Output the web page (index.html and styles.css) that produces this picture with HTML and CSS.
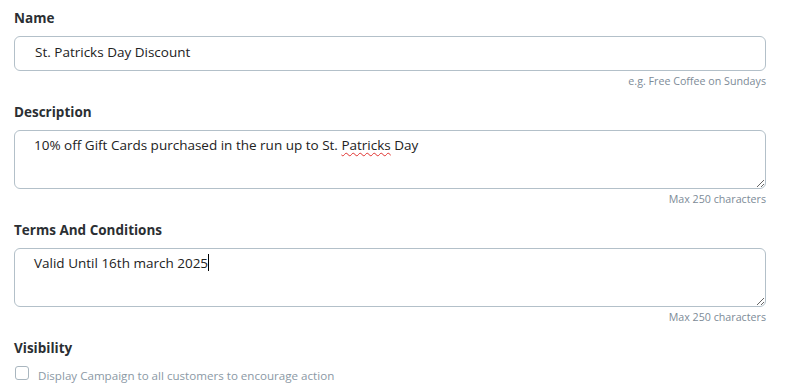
FILE: index.html
```html
<!DOCTYPE html>
<html lang="en">
<head>
  <meta charset="UTF-8">
  <title>Campaign</title>
  <link rel="stylesheet" href="styles.css">
</head>
<body>
  <form class="campaign-form">
    <div class="field">
      <label class="field-label" for="name">Name</label>
      <input class="field-input" id="name" type="text" value="St. Patricks Day Discount">
      <div class="field-hint">e.g. Free Coffee on Sundays</div>
    </div>

    <div class="field">
      <label class="field-label">Description</label>
      <div class="field-area">10% off Gift Cards purchased in the run up to St. <span class="typo">Patricks</span> Day</div>
      <div class="field-hint">Max 250 characters</div>
    </div>

    <div class="field">
      <label class="field-label">Terms And Conditions</label>
      <div class="field-area">Valid Until 16th march 2025<span class="caret"></span></div>
      <div class="field-hint">Max 250 characters</div>
    </div>

    <div class="field">
      <label class="field-label">Visibility</label>
      <label class="check-row">
        <span class="check-box"></span>
        Display Campaign to all customers to encourage action
      </label>
    </div>
  </form>
</body>
</html>
```

FILE: styles.css
```css
body {
  margin: 0;
  font-family: 'Open Sans', 'Noto Sans', sans-serif;
  background: #ffffff;
  color: #2b2f33;
}

.campaign-form {
  width: 752px;
  padding: 8px 0 0 14px;
}

.field {
  display: flex;
  flex-direction: column;
  margin-bottom: 13px;
}

.field-label {
  font-size: 13.5px;
  line-height: 20px;
  font-weight: 700;
  color: #2b2f33;
  margin-bottom: 8px;
}

.field-input {
  box-sizing: border-box;
  height: 35px;
  padding: 0 19px 4px 20px;
  border: 1px solid #b3c0c9;
  border-radius: 6px;
  font-family: inherit;
  font-size: 13.5px;
  color: #222;
  outline: none;
}

.field-area {
  box-sizing: border-box;
  height: 59px;
  padding: 4px 19px;
  border: 1px solid #b3c0c9;
  border-radius: 6px;
  font-size: 13.5px;
  line-height: 20px;
  color: #222;
  resize: vertical;
  overflow: auto;
}

.typo {
  text-decoration: underline wavy #e0322f;
  text-decoration-thickness: 1px;
  text-underline-offset: 2px;
}

.caret {
  display: inline-block;
  width: 1px;
  height: 17px;
  background: #000;
  vertical-align: -3px;
}

.field-hint {
  align-self: flex-end;
  margin-top: 3px;
  font-size: 10.7px;
  line-height: 15px;
  color: #7d8b97;
}

.check-row {
  display: flex;
  align-items: flex-start;
  gap: 9px;
  font-size: 11.6px;
  line-height: 19px;
  color: #8b99a5;
}

.check-box {
  width: 12px;
  height: 12px;
  border: 1px solid #a9b6bf;
  border-radius: 3px;
  margin-left: 1px;
}
```
